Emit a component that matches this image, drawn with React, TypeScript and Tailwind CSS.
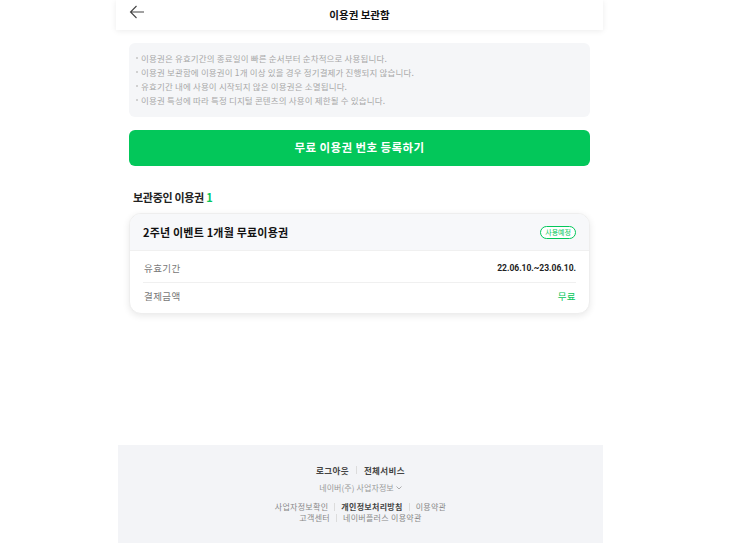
export default function App() {
  const notices = [
    '이용권은 유효기간의 종료일이 빠른 순서부터 순차적으로 사용됩니다.',
    '이용권 보관함에 이용권이 1개 이상 있을 경우 정기결제가 진행되지 않습니다.',
    '유효기간 내에 사용이 시작되지 않은 이용권은 소멸됩니다.',
    '이용권 특성에 따라 특정 디지털 콘텐츠의 사용이 제한될 수 있습니다.',
  ];

  return (
    <div className="min-h-[544px] bg-white font-['Noto_Sans_CJK_KR',sans-serif] text-[#222]">
      <div className="ml-[116px] w-[487px]">
        {/* 헤더 */}
        <header className="relative flex h-[30px] items-center justify-center bg-white shadow-[0_1px_6px_rgba(0,0,0,0.08)]">
          <button className="absolute left-[13px] top-[5px] text-[#444]">
            <svg width="16" height="14" viewBox="0 0 16 14" fill="none" stroke="currentColor" strokeWidth="1.1">
              <path d="M15 7H1.5M7.5 1L1.5 7l6 6" />
            </svg>
          </button>
          <h1 className="text-[10.5px] font-bold leading-none text-[#111]">이용권 보관함</h1>
        </header>

        <div className="px-[13px]">
          {/* 안내 */}
          <ul className="mt-[13px] rounded-md bg-[#f5f6f8] pl-[7px] pt-[8px] pb-[10px]">
            {notices.map(n => (
              <li key={n} className="flex items-center text-[8.5px] leading-[14px] tracking-[0.15px] text-[#a8a8a8]">
                <span className="mr-[3px] h-[2px] w-[2px] rounded-full bg-[#c4c4c4]" />
                {n}
              </li>
            ))}
          </ul>

          <button className="mt-[13px] flex h-[36px] w-full items-center justify-center rounded-md bg-[#03c75a] text-[11.5px] font-bold tracking-[0.4px] text-white">
            무료 이용권 번호 등록하기
          </button>

          <h2 className="mt-[24px] pl-[4px] text-[11px] font-bold leading-[14px] tracking-[-0.3px] text-[#222]">
            보관중인 이용권 <span className="text-[#03c75a]">1</span>
          </h2>

          {/* 이용권 카드 */}
          <div className="mt-[9px] overflow-hidden rounded-xl border border-[#eeeeee] bg-white shadow-[0_2px_7px_rgba(0,0,0,0.09)]">
            <div className="flex h-[37px] items-center justify-between border-b border-[#f0f0f0] bg-[#f7f8fa] px-[13px]">
              <span className="text-[11px] font-semibold tracking-[0.2px] text-[#111]">2주년 이벤트 1개월 무료이용권</span>
              <span className="flex h-[13px] items-center rounded-full border border-[#03c75a] bg-white px-[4px] text-[7px] leading-none text-[#03c75a]">
                사용예정
              </span>
            </div>
            <div className="px-[13px]">
              <div className="flex items-center justify-between border-b border-[#f0f0f0] pt-[10px] pb-[7px] leading-[14px]">
                <span className="pl-[1px] text-[9.5px] tracking-[0.4px] text-[#777]">유효기간</span>
                <span className="font-['Roboto',sans-serif] text-[8.5px] font-bold text-[#222]">22.06.10.~23.06.10.</span>
              </div>
              <div className="flex items-center justify-between pt-[6px] pb-[10px] leading-[14px]">
                <span className="pl-[1px] text-[9.5px] tracking-[0.4px] text-[#777]">결제금액</span>
                <span className="text-[9.5px] tracking-[0.4px] text-[#03c75a]">무료</span>
              </div>
            </div>
          </div>
        </div>

        {/* 푸터 */}
        <footer className="ml-[2px] mt-[131px] flex h-[98px] flex-col items-center bg-[#f3f4f7] pt-[19px] text-[8px] text-[#888]">
          <div className="flex items-center text-[8.5px] leading-[12px] tracking-[0.4px]">
            <span className="font-bold text-[#444]">로그아웃</span>
            <span className="mx-[7px] h-[8px] w-px bg-[#dcdcdc]" />
            <span className="font-bold text-[#444]">전체서비스</span>
          </div>
          <div className="mt-[6px] flex items-center leading-[12px] tracking-[0.1px] text-[#999]">
            네이버(주) 사업자정보
            <svg className="ml-[2px]" width="6" height="4" viewBox="0 0 6 4" fill="none" stroke="currentColor" strokeWidth="0.8">
              <path d="M0.5 0.5L3 3l2.5-2.5" />
            </svg>
          </div>
          <div className="mt-[7px] flex items-center leading-[11px] tracking-[0.3px]">
            <span>사업자정보확인</span>
            <span className="mx-[6px] h-[8px] w-px bg-[#dcdcdc]" />
            <span className="font-bold text-[#444]">개인정보처리방침</span>
            <span className="mx-[6px] h-[8px] w-px bg-[#dcdcdc]" />
            <span>이용약관</span>
          </div>
          <div className="flex items-center leading-[11px] tracking-[0.3px]">
            <span>고객센터</span>
            <span className="mx-[6px] h-[8px] w-px bg-[#dcdcdc]" />
            <span>네이버플러스 이용약관</span>
          </div>
        </footer>
      </div>
    </div>
  );
}
